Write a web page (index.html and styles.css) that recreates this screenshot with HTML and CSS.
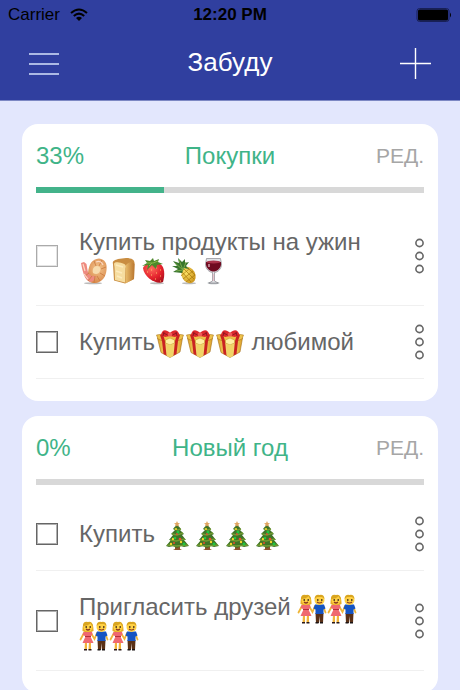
FILE: index.html
```html
<!DOCTYPE html>
<html lang="ru">
<head>
<meta charset="utf-8">
<meta name="viewport" content="width=device-width, initial-scale=1">
<title>Забуду</title>
<link rel="stylesheet" href="styles.css">
</head>
<body>
<svg class="sprite" width="0" height="0" aria-hidden="true">
  <defs>
    <linearGradient id="wood" x1="0" x2="1"><stop offset="0" stop-color="#e9bd6c"/><stop offset="1" stop-color="#b9762f"/></linearGradient>
    <radialGradient id="berry" cx=".4" cy=".3" r=".8"><stop offset="0" stop-color="#ff6a5c"/><stop offset=".6" stop-color="#e3202b"/><stop offset="1" stop-color="#a80f1c"/></radialGradient>
    <radialGradient id="pine" cx=".4" cy=".3" r=".8"><stop offset="0" stop-color="#ffe56a"/><stop offset="1" stop-color="#c58a10"/></radialGradient>
    <linearGradient id="gold" x1="0" x2="1"><stop offset="0" stop-color="#e0a52a"/><stop offset=".5" stop-color="#fae889"/><stop offset="1" stop-color="#dda025"/></linearGradient>
    <radialGradient id="prawn" cx=".6" cy=".4" r=".6"><stop offset="0" stop-color="#f3c48c"/><stop offset="1" stop-color="#d98a4c"/></radialGradient>
  </defs>
  <symbol id="shrimp" viewBox="0 0 30 30">
    <ellipse cx="14" cy="27.200" rx="9" ry="1" fill="#bbb"/>
    <path d="M9 17C10 8 13 3 20 2.500C26 3 28.500 8 27.500 14C27 21 23 26 17 27C11 27.500 7 24 6 19Z" fill="url(#prawn)"/>
    <path d="M2 7 5 6 7.500 8 8.500 14C9 18 12 21 17 20C16 24 14 26 11 26C6 24 4 18 2 7Z" fill="#ee8a80"/>
    <path d="M14 17C13 13 15 10 18 10C21 10 22 13 21 15C20 18 17 19 14 17Z" fill="#f7dcae"/>
    <path d="M6 20 10 17M9 25 13 20M15 27 16 20M21 25 18 20M26 20 21 17M27 11 22 13M23 4 20 10M15 5 17 10" stroke="#c9793f" stroke-width=".8" fill="none"/>
    <path d="M4 8 6 15M5 18 9 23M17 6Q22 4 24 9" stroke="#fbd9c4" stroke-width="1.200" fill="none"/>
  </symbol>
  <symbol id="bread" viewBox="0 0 30 30">
    <path d="M4 8C3 5 6 4 9 3L17 2C23 2 26 4 25.500 8L25 23 16 27.500 5 24.500Z" fill="#c98d41"/>
    <path d="M17 9C19 6 24 5 25.500 8L25 23 16.500 27.500Z" fill="url(#wood)"/>
    <path d="M5 8C5 6 8 6 10 6.500C15 7 18 9 16.500 12L16 26.500 6 24 5.500 11Z" fill="#f6dda0"/>
    <path d="M7 9 14 11M7 15 13 17M8 20 13 22" stroke="#fdebbd" stroke-width="1.500"/>
  </symbol>
  <symbol id="strawberry" viewBox="0 0 30 30">
    <ellipse cx="18" cy="27.200" rx="7" ry="1" fill="#bbb"/>
    <path d="M4 12C6 7 15 5 21 8C26 11 26 19 24 26C18 29 5 22 4 12Z" fill="url(#berry)"/>
    <path d="M8 16h1M12 19h1M12 14h1M17 17h1M21 20h1M16 23h1M21 25h1M21 14h1M17 12h1" stroke="#ffc36a" stroke-width="1"/>
    <path d="M3 10 8 7 6 4 11 5 14 2 15 5 20 3 19 6 24 8 18 9 17 13 13 9 8 14 9 9Z" fill="#4d882a"/>
    <path d="M8 7 14 7 19 5M13 7 10 10" stroke="#8abb49" fill="none"/>
  </symbol>
  <symbol id="pineapple" viewBox="0 0 30 30">
    <ellipse cx="20" cy="27.200" rx="7" ry="1" fill="#bbb"/>
    <ellipse cx="19.500" cy="19" rx="6.700" ry="8.600" transform="rotate(-28 19.500 19)" fill="url(#pine)"/>
    <path d="M13 16 22 26M15 13 25 23M19 12 26 19M12 20 20 13M14 23 24 15M17 26 26 19" stroke="#a7770b" stroke-width=".7"/>
    <path d="M13 17 4 16 9 13 3 10 8 10 4 5 10 7 9 2 13 6 16 3 16 7 20 6 17 10 20 13 15 12Z" fill="#38752d"/>
    <path d="M6 7 14 14 10 4M7 15 14 14 17 6" stroke="#79a94a" fill="none"/>
  </symbol>
  <symbol id="wine" viewBox="0 0 30 30">
    <ellipse cx="14.500" cy="27" rx="6" ry="1.300" fill="#aeb4b8"/>
    <path d="M7.500 2.500H21.500L22.500 8C22.500 13 19 16 15.500 16.500V25L19 27H10L13.500 25V16.500C10 16 6.500 13 6.500 8Z" fill="#e0e3e7" stroke="#89878d" stroke-width=".7"/>
    <path d="M7 6H22V9C21 13 18 15.500 14.500 15.500C11 15.500 8 13 7 9Z" fill="#6f0b20"/>
    <ellipse cx="14.500" cy="6" rx="7" ry="1.500" fill="#a93349"/>
    <path d="M10 8v3M14.500 18v7" stroke="#eac5cf" stroke-width="1.200"/>
  </symbol>
  <symbol id="gift" viewBox="0 0 30 30">
    <path d="M2.500 9 15 13 27.500 9 25 23 15 28.500 6 23.500Z" fill="url(#gold)" stroke="#a26b16" stroke-width=".6"/>
    <path d="M1.500 6 15 4 28.500 6 27 10 15 15 3 10Z" fill="#eec24a" stroke="#ad781e" stroke-width=".6"/>
    <path d="M5 6 8 5 10 12 11.500 26.500 8.500 25 7 12ZM25 6 22 5 20 12 18.500 26.500 21.500 25 23 12Z" fill="#ca2321"/>
    <path d="M10.500 11 15 9 19.500 11V14L15 16 10.500 14Z" fill="#fff0a2" stroke="#c69b34" stroke-width=".6"/>
    <path d="M12 15 15 16.500 18 15V27L15 28.500 12 27Z" fill="#f0d467"/>
    <path d="M15 4C11 0 7 0 6 6L10 8 15 7 20 8 24.500 6C23 0 19 0 15 4Z" fill="#dd292d"/>
    <path d="M9 3 8 7M21 3 22 7M13 6 8 4M17 6 22 4" stroke="#911722"/>
    <ellipse cx="15" cy="5.500" rx="2.300" ry="2" fill="#f15a57"/>
  </symbol>
  <symbol id="tree" viewBox="0 0 30 30">
    <path d="M13 24h5v4l2 1h-9l2-1Z" fill="#8d532b"/>
    <path d="M15 3 19 8 18 9 22 13 20 14 24 19 22 19 27 25 22 26 19 25 15 27 11 25 7 26 4 25 9 19 7 19 11 14 9 13 13 9 11 8Z" fill="#3f7426"/>
    <path d="M12 8 16 9 19 8M10 13 15 14 21 12M8 19 14 20 23 18M5 24 14 25 26 24" stroke="#739a32" stroke-width="1.500" fill="none"/>
    <path d="m15 0 .9 2 2.100.2-1.600 1.400.5 2.200-1.900-1.100-1.900 1.100.5-2.200L12 2.200l2.100-.2Z" fill="#dfa45f"/>
    <g fill="#f5d72c"><circle cx="14" cy="8" r="1"/><circle cx="11" cy="18" r="1.200"/><circle cx="19" cy="21" r="1.200"/><circle cx="9" cy="23" r="1.200"/></g>
    <g fill="#e84b32"><circle cx="15" cy="13" r="1"/><circle cx="18" cy="18" r="1.300"/><circle cx="12" cy="22" r="1"/></g>
    <g fill="#22c43f"><circle cx="16" cy="11" r="1.500"/><circle cx="13" cy="17" r="1.300"/><circle cx="22" cy="23" r="1.500"/></g>
  </symbol>
  <symbol id="couple" viewBox="0 0 30 30">
    <path d="M6 20h2v9H5.500ZM10 20h2v9H9.500Z" fill="#f2b43a"/>
    <path d="M5 28h3v1.500H5ZM9.500 28h3v1.500h-3Z" fill="#29191a"/>
    <path d="M5 12 1.500 18.500M12 12 15.500 18 18 12M26 12 28.500 18.500" stroke="#efb638" stroke-width="1.800" fill="none" stroke-linecap="round"/>
    <path d="M5 10.500h8l.5 3-2 2 3 6.500h-11l3-6.500-3-2Z" fill="#ef6970"/>
    <path d="M6 15.500h6" stroke="#b52f3b"/>
    <path d="M18.500 19h8l-.5 10h-3l-.5-7-.5 7h-3Z" fill="#593016"/>
    <path d="M18.500 28h3v1.500h-3ZM23 28h3v1.500h-3Z" fill="#1b1515"/>
    <path d="M18 10.500h9l1.500 4-2 1v4.500h-8v-4.500l-2-1Z" fill="#1554c2"/>
    <path d="M3.500 10C3.500 3 4.500 1 9 1S14.500 4 14.500 10L12 11H6Z" fill="#e5ae26"/>
    <circle cx="9" cy="6" r="4.500" fill="#ffd043"/><circle cx="22.500" cy="6" r="5" fill="#ffd043"/>
    <path d="M4 5Q9 5 12 2Q12 5 14 5Q13 0 9 1Q4 0 4 5M17.500 5 20 3 25 3 27.500 5Q27 0 22.500 1Q18 0 17.500 5" fill="#d9a520"/>
    <path d="M6.500 6h1.500M10.500 6h1.500M20 6h1.500M24 6h1.500" stroke="#332319" stroke-width="1.500"/>
    <path d="M7 8Q9 10 11 8M20 8Q22.500 10 25 8" stroke="#8a391d" stroke-width="1.200" fill="none"/>
  </symbol>
  <symbol id="dots" viewBox="0 0 10 36">
    <g fill="none" stroke="#666" stroke-width="1.600"><circle cx="5.500" cy="5" r="3.600"/><circle cx="5.500" cy="18" r="3.600"/><circle cx="5.500" cy="31" r="3.600"/></g>
  </symbol>
</svg>

<header class="header">
  <div class="status">
    <div class="carrier">
      <span>Carrier</span>
      <svg width="18" height="14" viewBox="0 0 18 14" aria-hidden="true">
        <path d="M1 5Q9-2 17 5M3.800 8Q9 3.200 14.200 8" fill="none" stroke="#000" stroke-width="2"/>
        <path d="M6 10Q9 7.500 12 10L9 13Z"/>
      </svg>
    </div>
    <span class="clock">12:20 PM</span>
    <svg class="battery" width="36" height="14" viewBox="0 0 36 14" aria-hidden="true">
      <rect x="1" y=".5" width="32" height="13" rx="2.500" fill="none" stroke="#182057"/>
      <rect x="2" y="1.500" width="30" height="11" rx="1.500"/>
      <path d="M34 4.500q2 2.500 0 5Z"/>
    </svg>
  </div>
  <nav class="nav">
    <button class="nav-button" type="button" aria-label="Меню">
      <svg width="32" height="32" viewBox="0 0 32 32"><path d="M1 6H31M1 16H31M1 26H31" stroke="#d5e2fb" stroke-width="1.600"/></svg>
    </button>
    <h1 class="title">Забуду</h1>
    <button class="nav-button" type="button" aria-label="Добавить">
      <svg width="32" height="32" viewBox="0 0 32 32"><path d="M0 15.500H31M15.500 0V31" stroke="#fff" stroke-width="1.400"/></svg>
    </button>
  </nav>
</header>

<main class="lists">
  <section class="card">
    <div class="card-head">
      <span class="percent">33%</span>
      <h2 class="card-title">Покупки</h2>
      <button class="edit" type="button">РЕД.</button>
    </div>
    <div class="progress"><div class="progress-fill" style="width:33%"></div></div>
    <ul class="tasks">
      <li class="task task-tall">
        <input class="check check-muted" type="checkbox" id="t1">
        <label class="label" for="t1">Купить продукты на ужин <span class="emoji-run"><svg class="emoji"><use href="#shrimp"/></svg><svg class="emoji"><use href="#bread"/></svg><svg class="emoji"><use href="#strawberry"/></svg><svg class="emoji"><use href="#pineapple"/></svg><svg class="emoji"><use href="#wine"/></svg></span></label>
        <button class="more" type="button" aria-label="Ещё"><svg width="10" height="36"><use href="#dots"/></svg></button>
      </li>
      <li class="task">
        <input class="check" type="checkbox" id="t2">
        <label class="label" for="t2">Купить<span class="emoji-run"><svg class="emoji"><use href="#gift"/></svg><svg class="emoji"><use href="#gift"/></svg><svg class="emoji"><use href="#gift"/></svg></span> любимой</label>
        <button class="more" type="button" aria-label="Ещё"><svg width="10" height="36"><use href="#dots"/></svg></button>
      </li>
    </ul>
  </section>

  <section class="card">
    <div class="card-head">
      <span class="percent">0%</span>
      <h2 class="card-title">Новый год</h2>
      <button class="edit" type="button">РЕД.</button>
    </div>
    <div class="progress"><div class="progress-fill" style="width:0%"></div></div>
    <ul class="tasks">
      <li class="task">
        <input class="check" type="checkbox" id="t3">
        <label class="label" for="t3">Купить <span class="emoji-run"><svg class="emoji"><use href="#tree"/></svg><svg class="emoji"><use href="#tree"/></svg><svg class="emoji"><use href="#tree"/></svg><svg class="emoji"><use href="#tree"/></svg></span></label>
        <button class="more" type="button" aria-label="Ещё"><svg width="10" height="36"><use href="#dots"/></svg></button>
      </li>
      <li class="task task-tall">
        <input class="check" type="checkbox" id="t4">
        <label class="label" for="t4">Пригласить друзей <span class="emoji-run"><svg class="emoji"><use href="#couple"/></svg><svg class="emoji"><use href="#couple"/></svg></span><br><span class="emoji-run"><svg class="emoji"><use href="#couple"/></svg><svg class="emoji"><use href="#couple"/></svg></span></label>
        <button class="more" type="button" aria-label="Ещё"><svg width="10" height="36"><use href="#dots"/></svg></button>
      </li>
    </ul>
  </section>
</main>
</body>
</html>
```
FILE: styles.css
```css
* {
  box-sizing: border-box;
}

body {
  margin: 0;
  background: #e3e7fd;
  color: #666;
  font-family: "Liberation Sans", Arial, sans-serif;
  font-size: 24px;
  line-height: 28px;
}

button {
  padding: 0;
  border: 0;
  background: none;
  font: inherit;
  color: inherit;
  cursor: pointer;
}

svg {
  display: block;
}

.sprite {
  position: absolute;
}

.header {
  padding-bottom: 2px;
  background: #303f9f;
  border-bottom: 1px solid #7d88c4;
}

.status {
  display: grid;
  grid-template-columns: 1fr auto 1fr;
  align-items: center;
  height: 30px;
  padding: 0 8px;
  color: #000;
  font-size: 17px;
  line-height: 20px;
}

.carrier {
  display: flex;
  align-items: center;
  gap: 10px;
}

.clock {
  font-weight: bold;
}

.battery {
  justify-self: end;
}

.nav {
  display: flex;
  align-items: center;
  justify-content: space-between;
  height: 68px;
  padding: 0 28px;
}

.title {
  margin: 0;
  padding-bottom: 4px;
  color: #fff;
  font-size: 26px;
  font-weight: normal;
}

.lists {
  display: grid;
  gap: 15px;
  padding: 23px 22px 14px;
}

.card {
  padding: 18px 14px 22px;
  border-radius: 16px;
  background: #fff;
}

.card-head {
  display: grid;
  grid-template-columns: 1fr auto 1fr;
  align-items: center;
  margin-bottom: 17px;
  color: #3fb488;
}

.card-title {
  margin: 0;
  font-size: 24px;
  font-weight: normal;
}

.edit {
  justify-self: end;
  color: #a6a6a6;
  font-size: 21px;
}

.progress {
  height: 6px;
  background: #d8d8d8;
}

.progress-fill {
  height: 100%;
  background: #43b38a;
}

.tasks {
  margin: 13px 0 0;
  padding: 0;
  list-style: none;
}

.task {
  display: flex;
  align-items: center;
  min-height: 73px;
  border-bottom: 1px solid #f0f0f0;
}

.task-tall {
  min-height: 100px;
}

.check {
  flex: none;
  width: 22px;
  height: 22px;
  margin: 0 21px 0 0;
  appearance: none;
  border: 1px solid #666;
  outline: 1px solid #b0b0b0;
  outline-offset: -2px;
}

.check-muted {
  border-color: #aaa;
  outline-color: #e4e4e4;
}

.label {
  flex: 1;
  line-height: 27px;
}

.emoji-run {
  display: inline-flex;
  vertical-align: middle;
}

.emoji {
  width: 30px;
  height: 30px;
  margin: -3px 0;
}

.more {
  flex: none;
}
```
